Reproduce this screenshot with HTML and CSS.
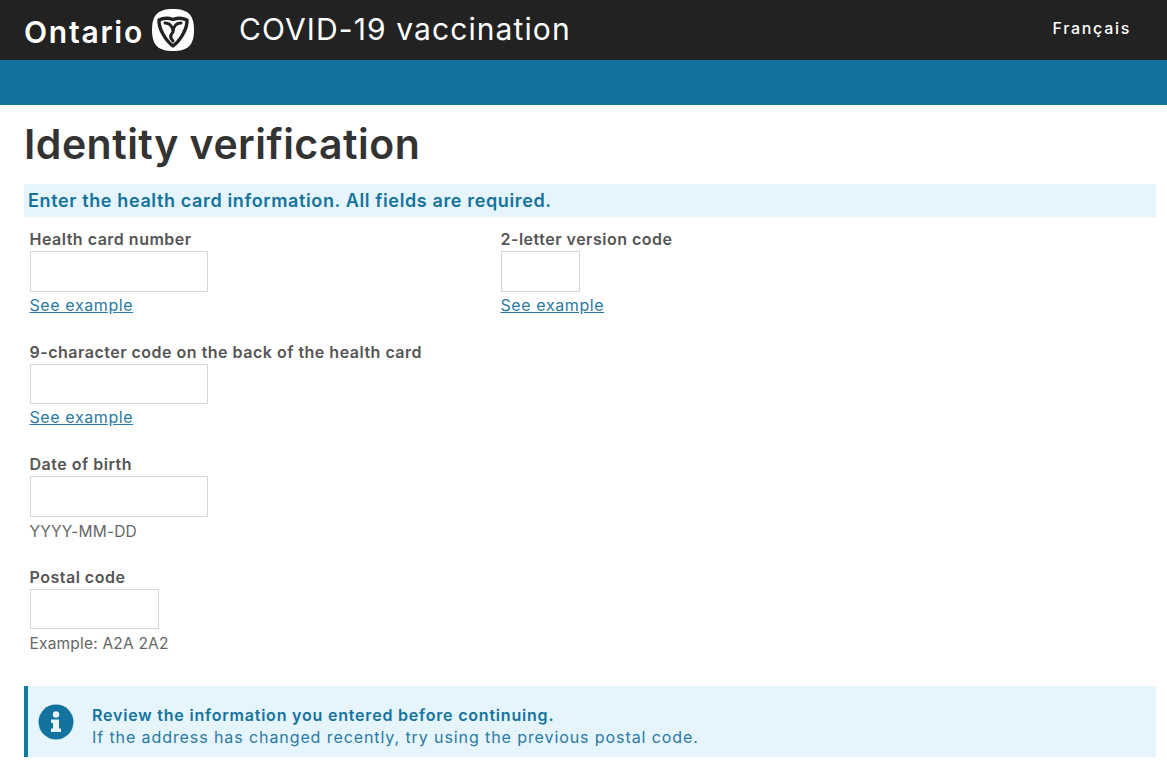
FILE: index.html
```html
<!DOCTYPE html>
<html lang="en">
<head>
<meta charset="UTF-8" />
<meta name="viewport" content="width=device-width, initial-scale=1" />
<title>COVID-19 vaccination</title>
<link rel="stylesheet" href="styles.css">
</head>
<body>

<header class="top-bar">
  <div class="brand">
    <span class="brand-name">Ontario</span>
    <svg class="brand-logo" viewBox="1 1 42 42" aria-hidden="true">
      <path d="M22 1 C36 1 43 6 43 22 C43 38 36 43 22 43 C8 43 1 38 1 22 C1 6 8 1 22 1 Z" fill="#fff"/>
      <path d="M8 12 C13 9.500 18 10 22 11.500 C26 10 31 9.500 36 12 C36.500 20 30 32 22 38 C14 32 7.500 20 8 12 Z" fill="none" stroke="#222" stroke-width="3.400" stroke-linejoin="round"/>
      <path d="M14 15 C19 15 22 19 22 24 C22 19 25 15 30 15 M22 24 C19 27 19 30 22 33" fill="none" stroke="#222" stroke-width="3" stroke-linecap="round"/>
    </svg>
  </div>
  <div class="app-title">COVID-19 vaccination</div>
  <a class="lang" href="#">Français</a>
</header>
<div class="blue-bar"></div>

<main class="content">
  <h1>Identity verification</h1>
  <div class="intro">Enter the health card information. All fields are required.</div>

  <div class="row">
    <div class="field field-wide">
      <label>Health card number</label>
      <input class="input-lg" type="text" />
      <a class="hint-link" href="#">See example</a>
    </div>
    <div class="field">
      <label>2-letter version code</label>
      <input class="input-sm" type="text" />
      <a class="hint-link" href="#">See example</a>
    </div>
  </div>

  <div class="field">
    <label>9-character code on the back of the health card</label>
    <input class="input-lg" type="text" />
    <a class="hint-link" href="#">See example</a>
  </div>

  <div class="field">
    <label>Date of birth</label>
    <input class="input-lg" type="text" />
    <span class="hint">YYYY-MM-DD</span>
  </div>

  <div class="field">
    <label>Postal code</label>
    <input class="input-md" type="text" />
    <span class="hint">Example: A2A 2A2</span>
  </div>

  <div class="notice">
    <svg class="notice-icon" viewBox="0 0 36 36" aria-hidden="true">
      <circle cx="18" cy="18" r="17.500" fill="#13739e"/>
      <circle cx="18" cy="10.500" r="3.200" fill="#e6f4fb"/>
      <path d="M13 15.500 H21 V24.500 H23 V28 H13 V24.500 H15 V19 H13 Z" fill="#e6f4fb"/>
    </svg>
    <div class="notice-text">
      <strong>Review the information you entered before continuing.</strong>
      <span>If the address has changed recently, try using the previous postal code.</span>
    </div>
  </div>
</main>

</body>
</html>
```

FILE: styles.css
```css
body {
  margin: 0;
  font-family: 'Inter', 'Liberation Sans', sans-serif;
  background-color: #fff;
  color: #4e4e4e;
  overflow: hidden;
}

.top-bar {
  display: flex;
  align-items: center;
  height: 60px;
  padding: 0 36px 0 24px;
  background-color: #222;
  color: #fff;
}

.brand { display: flex; align-items: center; width: 215px; }
.brand-name { font-size: 30px; font-weight: 600; letter-spacing: 1.75px; width: 128px; margin-top: 4px; }
.brand-logo { width: 42px; height: 42px; }

.app-title { font-size: 30px; letter-spacing: 1.1px; flex: 1; margin-bottom: 2px; }

.lang { color: #fff; font-size: 16px; font-weight: 500; letter-spacing: 1.7px; text-decoration: none; margin-bottom: 4px; }

.blue-bar { height: 45px; background-color: #13739e; }

.content { padding: 0 11px 0 24px; }

h1 {
  margin: 14px 0 15px;
  font-size: 41px;
  line-height: 50px;
  font-weight: 600;
  letter-spacing: 0.48px;
  color: #333;
}

.intro {
  height: 33px;
  line-height: 33px;
  padding-left: 4px;
  background-color: #e6f4fb;
  color: #13739e;
  font-size: 18px;
  font-weight: 600;
  letter-spacing: 0.63px;
}

.row { display: flex; }
.field-wide { width: 465.5px; }

.field {
  display: flex;
  flex-direction: column;
  align-items: flex-start;
  padding: 12px 0 13.1px 5.5px;
}

label {
  font-size: 16px;
  line-height: 20px;
  font-weight: 600;
  letter-spacing: 0.5px;
  color: #555;
  margin-bottom: 2px;
}

input {
  box-sizing: border-box;
  height: 40.5px;
  border: 1px solid #d5d5d5;
  padding: 0;
  background: #fff;
}

.input-lg { width: 178.5px; }
.input-md { width: 129px; }
.input-sm { width: 79px; }

.hint-link, .hint {
  font-size: 16px;
  line-height: 22px;
  letter-spacing: 0.6px;
}

.hint-link { color: #2a7aa3; margin: 2px 0 1px; }
.hint { color: #666; font-size: 15.5px; letter-spacing: 0.2px; margin: 4px 0 -1px; }

.notice {
  display: flex;
  align-items: center;
  gap: 18px;
  height: 71px;
  margin-top: 19px;
  padding-left: 10px;
  border-left: 4px solid #0e7c9c;
  background-color: #e6f4fb;
  color: #2a7aa3;
}

.notice-icon { width: 36px; height: 36px; flex: none; }

.notice-text { display: flex; flex-direction: column; font-size: 16px; line-height: 22px; letter-spacing: 0.91px; margin-top: 9px; }
.notice-text strong { font-weight: 600; color: #13739e; letter-spacing: 0.8px; }
```
